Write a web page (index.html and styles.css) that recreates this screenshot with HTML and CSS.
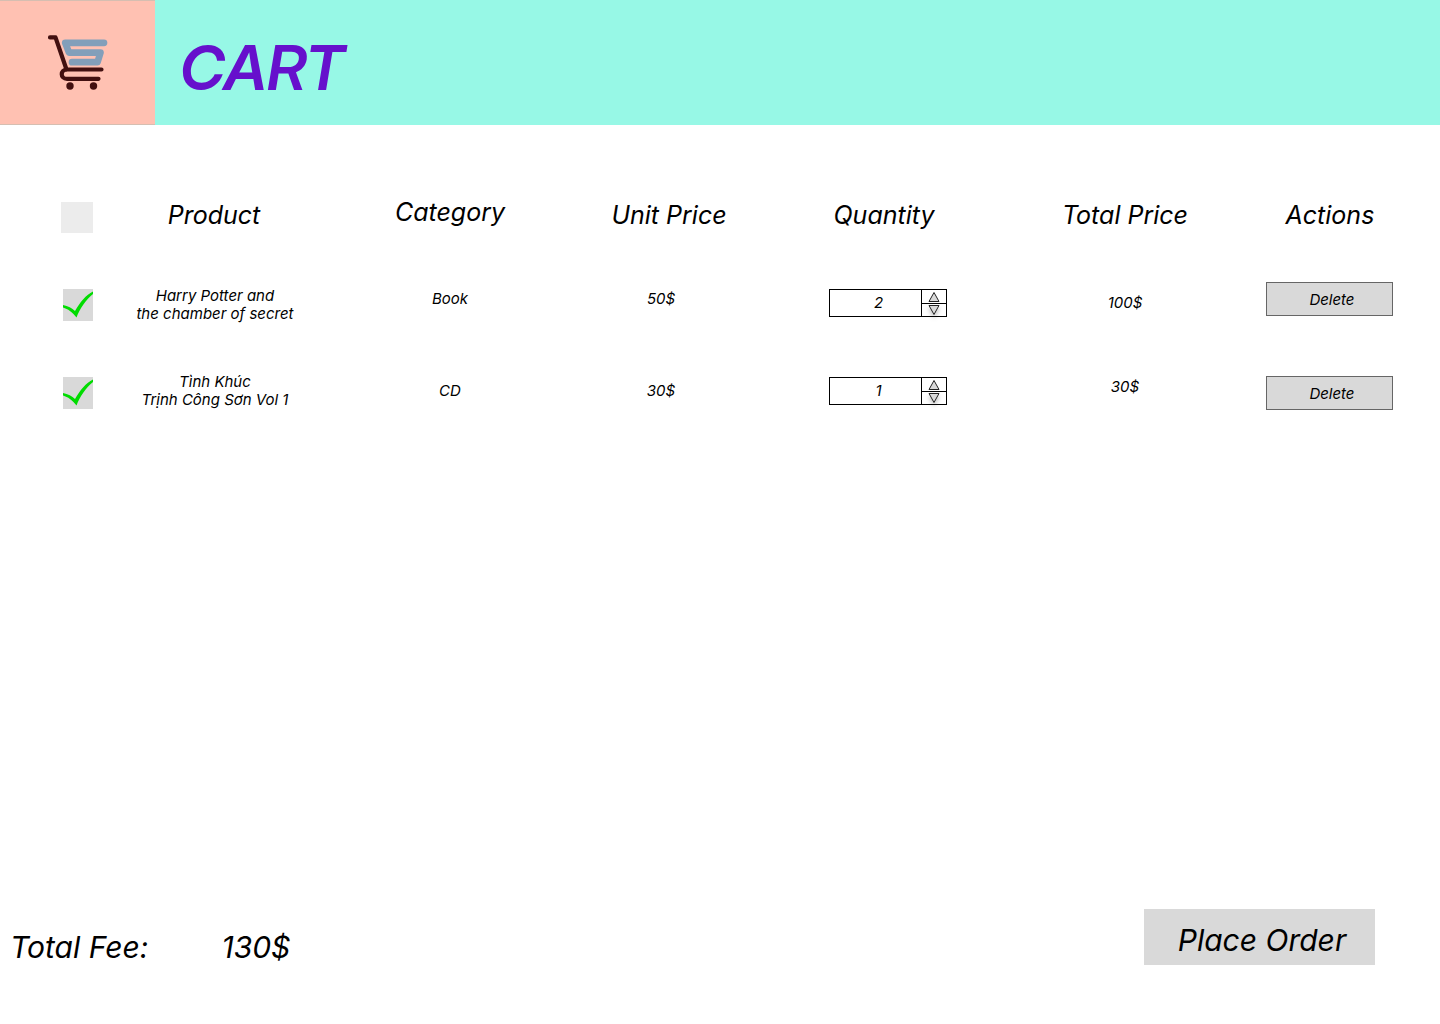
FILE: index.html
```html
<!DOCTYPE html>
<html lang="en">
<head>
<meta charset="utf-8">
<meta name="viewport" content="width=device-width, initial-scale=1">
<title>Cart</title>
<link rel="stylesheet" href="styles.css">
</head>
<body>
<header class="header">
  <div class="logo">
    <svg width="62" height="58" viewBox="0 0 62 58" fill="none" stroke-linecap="round" stroke-linejoin="round" aria-hidden="true">
      <path d="M57 8.800H18.200L22 18.600H53.500L50.500 28.200H25" stroke="#829fba" stroke-width="6.700"/>
      <path d="M3 3.400h5.500L19.500 35.500M54.500 35.500H20c-7 0-7 9.300 0 9.300H51.500" stroke="#421010" stroke-width="4.200"/>
      <circle cx="23" cy="52" r="3.700" fill="#421010"/>
      <circle cx="46.500" cy="52" r="3.700" fill="#421010"/>
    </svg>
  </div>
  <h1 class="title">CART</h1>
</header>
<main class="main">
  <table class="cart">
    <colgroup>
      <col class="col-select"><col class="col-product"><col class="col-wide"><col class="col-unit"><col class="col-wide"><col class="col-total"><col class="col-actions">
    </colgroup>
    <thead>
      <tr>
        <th class="select lowered"><input class="select-all" type="checkbox" aria-label="Select all"></th>
        <th>Product</th>
        <th class="raised">Category</th>
        <th>Unit Price</th>
        <th class="quantity">Quantity</th>
        <th>Total Price</th>
        <th>Actions</th>
      </tr>
    </thead>
    <tbody>
      <tr>
        <td class="select lowered">
          <label class="check"><input type="checkbox" checked aria-label="Select Harry Potter and the chamber of secret"><svg width="30" height="32" viewBox="0 0 30 32" aria-hidden="true"><path d="M0 16C5 17 9 19 12 22C17 13 23 6 30 2.500V5C23 11 17 19 13.500 28.500C9 23 5 20 0 18.500Z" fill="#00dc00"/></svg></label>
        </td>
        <td class="product lowered">Harry Potter and<br>the chamber of secret</td>
        <td class="raised">Book</td>
        <td class="unit raised">50$</td>
        <td>
          <div class="stepper">
            <input type="text" inputmode="numeric" value="2" aria-label="Quantity">
            <div class="arrows">
              <button type="button" aria-label="Increase"><svg width="12" height="12" viewBox="0 0 12 12"><path d="M6 1.500L11 10.500H1Z"/></svg></button>
              <button type="button" aria-label="Decrease"><svg width="12" height="12" viewBox="0 0 12 12"><path d="M6 10.500L1 1.500H11Z"/></svg></button>
            </div>
          </div>
        </td>
        <td>100$</td>
        <td class="raised"><button class="delete" type="button">Delete</button></td>
      </tr>
      <tr>
        <td class="select lowered">
          <label class="check"><input type="checkbox" checked aria-label="Select Tình Khúc Trịnh Công Sơn Vol 1"><svg width="30" height="32" viewBox="0 0 30 32" aria-hidden="true"><path d="M0 16C5 17 9 19 12 22C17 13 23 6 30 2.500V5C23 11 17 19 13.500 28.500C9 23 5 20 0 18.500Z" fill="#00dc00"/></svg></label>
        </td>
        <td class="product">Tình Khúc<br>Trịnh Công Sơn Vol 1</td>
        <td>CD</td>
        <td class="unit">30$</td>
        <td>
          <div class="stepper">
            <input type="text" inputmode="numeric" value="1" aria-label="Quantity">
            <div class="arrows">
              <button type="button" aria-label="Increase"><svg width="12" height="12" viewBox="0 0 12 12"><path d="M6 1.500L11 10.500H1Z"/></svg></button>
              <button type="button" aria-label="Decrease"><svg width="12" height="12" viewBox="0 0 12 12"><path d="M6 10.500L1 1.500H11Z"/></svg></button>
            </div>
          </div>
        </td>
        <td class="raised">30$</td>
        <td class="lowered"><button class="delete" type="button">Delete</button></td>
      </tr>
    </tbody>
  </table>
</main>
<footer class="footer">
  <p class="fee"><span>Total Fee:</span><span>130$</span></p>
  <button class="order" type="button">Place Order</button>
</footer>
</body>
</html>
```

FILE: styles.css
```css
* {
  box-sizing: border-box;
}

body {
  display: flex;
  flex-direction: column;
  min-height: 100vh;
  margin: 0;
  background: #fff;
  color: #000;
  font: italic 400 15px/18px Inter, sans-serif;
}

button,
input {
  margin: 0;
  padding: 0;
  border: 0;
  border-radius: 0;
  color: inherit;
  font: inherit;
}

.header {
  display: flex;
  align-items: stretch;
  height: 125px;
  background: #97f8e6;
}

.logo {
  display: flex;
  align-items: center;
  justify-content: center;
  width: 155px;
  border-top: 1px solid #d6beb1;
  border-bottom: 1px solid #d6beb1;
  background: #ffc1b2;
}

.title {
  align-self: center;
  margin: 0;
  padding: 10px 0 0 25px;
  color: #6610cc;
  font-family: "Inter Display", Inter, sans-serif;
  font-size: 62px;
  font-weight: 600;
  line-height: 76px;
}

.main {
  flex: 1;
  padding-top: 48px;
}

.cart {
  width: 100%;
  border-collapse: collapse;
  table-layout: fixed;
  text-align: center;
}

.col-select { width: 8.33%; }
.col-product { width: 13.06%; }
.col-wide { width: 19.72%; }
.col-unit { width: 10.7%; }
.col-total { width: 13.19%; }
.col-actions { width: 15.28%; }

.cart th {
  height: 86px;
  padding: 0 0 2px;
  font-size: 25px;
  font-weight: 400;
  line-height: 30px;
}

.cart td {
  height: 88px;
  padding: 0;
}

.cart .raised { padding-bottom: 8px; }
.cart .lowered { padding-top: 4px; }
.cart .product { padding-left: 2px; }
.cart .unit { padding-right: 16px; }
.cart .quantity { padding-right: 8px; }

.cart .select {
  padding-left: 63px;
  text-align: left;
}

.cart th.select {
  padding-left: 61px;
}

.select-all {
  display: block;
  width: 32px;
  height: 31px;
  appearance: none;
  background: #ececec;
}

.check {
  display: grid;
  width: 30px;
  height: 32px;
}

.check input,
.check svg {
  grid-area: 1 / 1;
}

.check input {
  width: 30px;
  height: 32px;
  appearance: none;
  background: #d9d9d9;
}

.check svg {
  visibility: hidden;
  pointer-events: none;
}

.check input:checked + svg {
  visibility: visible;
}

.stepper {
  display: flex;
  width: 118px;
  height: 28px;
  margin: 0 auto;
  border: 1px solid #000;
}

.stepper input {
  flex: 1;
  min-width: 0;
  padding-left: 6px;
  background: #fff;
  text-align: center;
}

.arrows {
  display: grid;
  grid-template-rows: 13px 13px;
  width: 25px;
  border-left: 1px solid #000;
}

.arrows button {
  display: flex;
  align-items: flex-end;
  justify-content: center;
  background: none;
}

.arrows button + button {
  align-items: flex-start;
  border-top: 1px solid #000;
}

.arrows svg {
  flex: none;
}

.arrows path {
  fill: #d9d9d9;
  stroke: #222;
}

.arrows button + button svg {
  filter: drop-shadow(0 3px 2px rgba(0, 0, 0, 0.25));
}

.delete {
  width: 127px;
  height: 34px;
  padding: 2px 0 0 4px;
  border: 1px solid #666;
  background: #d9d9d9;
}

.footer {
  display: flex;
  align-items: flex-end;
  justify-content: space-between;
  padding: 0 65px 59px 10px;
  font-size: 30px;
  line-height: 36px;
}

.fee {
  display: flex;
  gap: 73px;
  margin: 0;
}

.order {
  width: 231px;
  height: 56px;
  padding: 6px 0 0 5px;
  background: #d9d9d9;
}
```
